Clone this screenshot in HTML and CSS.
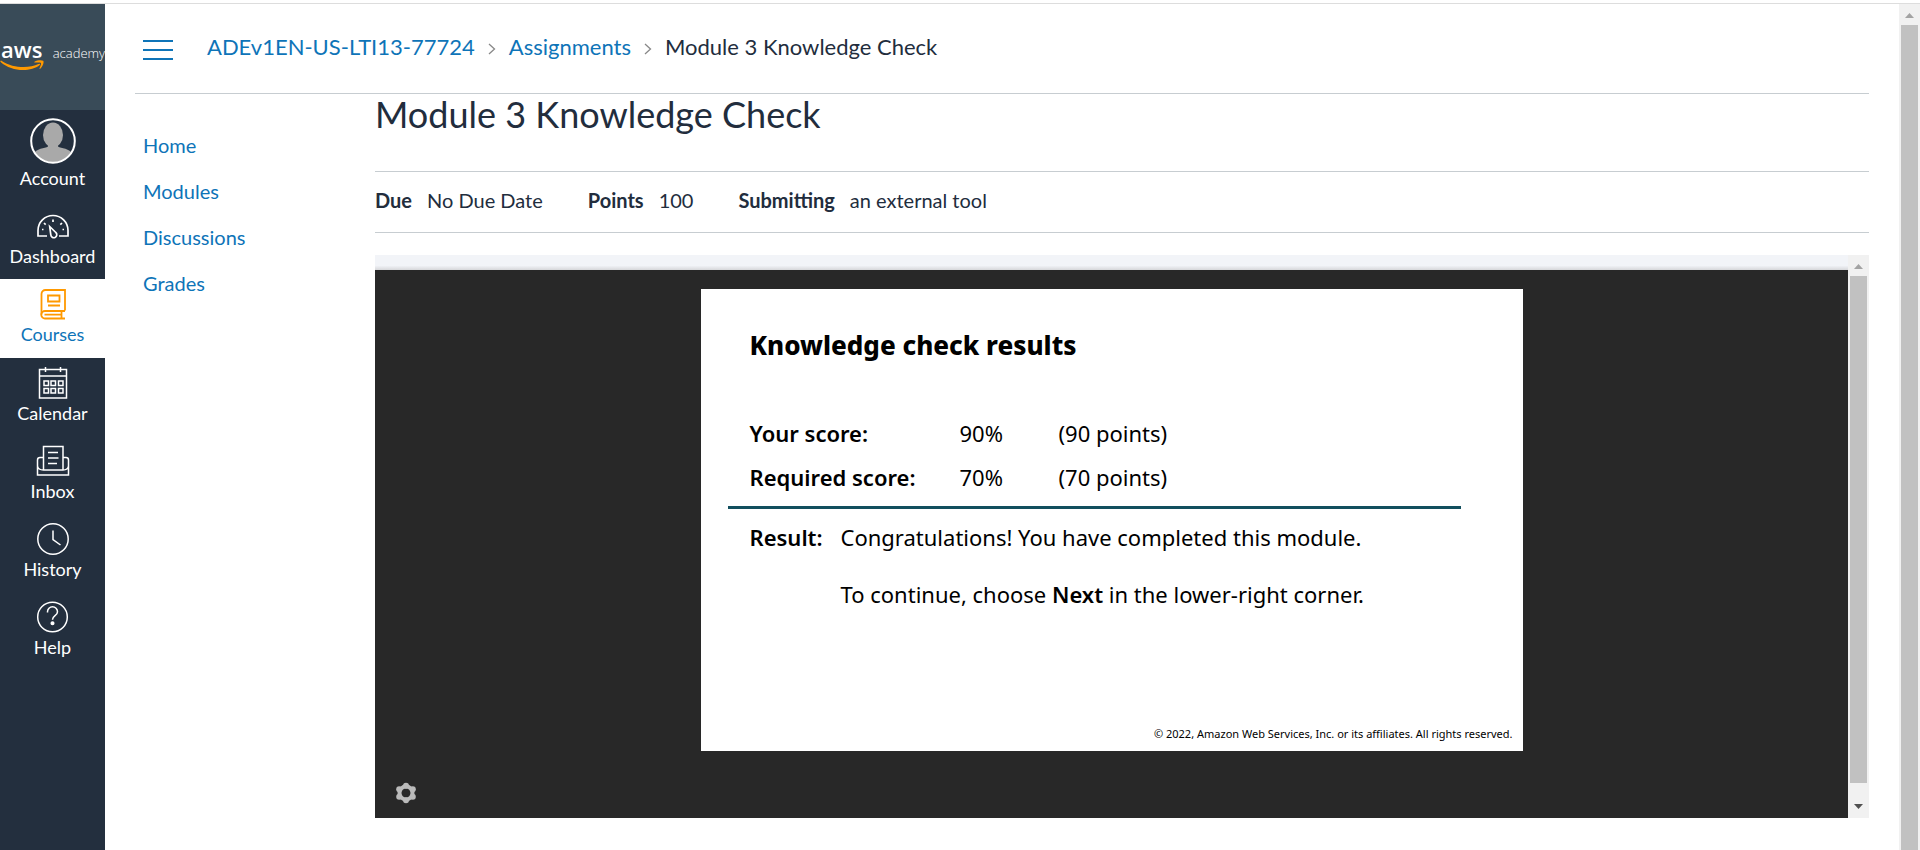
FILE: index.html
```html
<!DOCTYPE html>
<html lang="en">
<head>
<meta charset="utf-8">
<title>Module 3 Knowledge Check</title>
<link rel="stylesheet" href="styles.css">
</head>
<body>
<div class="app">
  <nav class="global-nav" aria-label="Global">
    <a class="logo" href="#">
      <span class="logo-aws">aws
        <svg class="logo-smile" viewBox="0 0 44 11" width="44" height="11" fill="#ff9900" aria-hidden="true"><path d="M.3 1.2Q.8.2 1.8.9C13 8.300 29 8.600 38.500 4Q40.800 3.300 39.700 5C31 12 12 12.300.6 2Z"/><path d="M34.500 1.700C37 .2 41.500-.2 43.200.8 44.400 2 42.600 7 40.300 8.800 39.500 9.200 39.300 8.800 39.600 8.200 40.500 6 41.400 3.600 40.900 2.900 40.200 2.200 37.600 2.400 35 2.600 34.200 2.600 34 2.200 34.500 1.700Z"/></svg>
      </span>
      <span class="logo-academy">academy</span>
    </a>
    <a class="nav-item nav-account" href="#">
      <svg width="46" height="46" viewBox="0 0 46 46" aria-hidden="true"><defs><clipPath id="face"><circle cx="23" cy="23" r="21.500"/></clipPath></defs><g clip-path="url(#face)" fill="#a9a9a9"><ellipse cx="23" cy="17" rx="10" ry="12.500"/><path d="M18 25h10v3.500c3 2 12 1.500 14.500 8V46h-39V36.500C6 30 15 30.500 18 28.500Z"/></g><circle cx="23" cy="23" r="21.800" fill="none" stroke="#fff" stroke-width="2"/></svg>
      <span>Account</span>
    </a>
    <a class="nav-item" href="#">
      <svg width="34" height="32" viewBox="0 0 34 32" fill="none" stroke="#fff" stroke-width="1.700" aria-hidden="true"><path d="M11 26H2V20.500a15 15 0 0 1 30 0V26H23"/><path d="M13.700 16.500 19.800 22.500a3 3 0 1 1-5 2.300Z"/><path d="M17 9.500v2.600M8 13l1.700 1.600M26 13l-1.700 1.600M6 19.500h1.500M26.500 19.500H28"/></svg>
      <span>Dashboard</span>
    </a>
    <a class="nav-item active" href="#">
      <svg width="34" height="32" viewBox="0 0 34 32" fill="none" stroke="#ff9900" stroke-width="1.800" aria-hidden="true"><path d="M29 22.500V2H9.500A4 4 0 0 0 5.500 6V26.500"/><path d="M29 23H9a3.700 3.700 0 0 0 0 7.500H29M25.500 23v7M8.500 26.700H25.500M12 7.500H23.500V13.500H12ZM12 17.500H24"/></svg>
      <span>Courses</span>
    </a>
    <a class="nav-item" href="#">
      <svg width="34" height="32" viewBox="0 0 34 32" fill="none" stroke="#fff" stroke-width="1.500" aria-hidden="true"><path d="M3.500 2.500H30.500V31H3.500ZM3.500 9H30.500M9.500 0v5M24.500 0v5"/><path d="M8 14h4.500v4.500H8ZM15 14h4.500v4.500H15ZM22.500 14H27v4.500h-4.500ZM8 21.500h4.500V26H8ZM15 21.500h4.500V26H15ZM22.500 21.500H27V26h-4.500Z"/></svg>
      <span>Calendar</span>
    </a>
    <a class="nav-item" href="#">
      <svg width="34" height="32" viewBox="0 0 34 32" fill="none" stroke="#fff" stroke-width="1.500" aria-hidden="true"><path d="M7.500 25V1.500H27V25M7.500 12.500H4A2.500 2.500 0 0 0 1.500 15V30H32.500V15A2.500 2.500 0 0 0 30 12.500H27M1.500 21C2 24.500 4 25 7.500 25H27C30 25 32 24.500 32.500 21M12 7.500H22M12 13H22.500M12 18.500H21"/></svg>
      <span>Inbox</span>
    </a>
    <a class="nav-item" href="#">
      <svg width="34" height="32" viewBox="0 0 34 32" fill="none" stroke="#fff" stroke-width="1.500" aria-hidden="true"><circle cx="17" cy="16" r="15.200"/><path d="M17 7.500V16.500L24.500 22"/></svg>
      <span>History</span>
    </a>
    <a class="nav-item" href="#">
      <svg width="34" height="32" viewBox="0 0 34 32" fill="none" stroke="#fff" stroke-width="1.500" aria-hidden="true"><circle cx="16.500" cy="16" r="14.800"/><path d="M11.500 11.500v-.8a5 5 0 0 1 10 0c0 4.300-5 3.600-5 8"/><circle cx="16.500" cy="22.300" r="1.300" fill="#fff"/></svg>
      <span>Help</span>
    </a>
  </nav>

  <div class="page">
    <header class="topbar">
      <button class="menu-toggle" type="button" aria-label="Toggle course navigation"><span></span><span></span><span></span></button>
      <nav class="crumbs" aria-label="Breadcrumbs">
        <a href="#">ADEv1EN-US-LTI13-77724</a>
        <svg width="8" height="12" viewBox="0 0 8 12" fill="none" stroke="#888" stroke-width="1.300" aria-hidden="true"><path d="M1 1l5.500 5L1 11"/></svg>
        <a href="#">Assignments</a>
        <svg width="8" height="12" viewBox="0 0 8 12" fill="none" stroke="#888" stroke-width="1.300" aria-hidden="true"><path d="M1 1l5.500 5L1 11"/></svg>
        <span>Module 3 Knowledge Check</span>
      </nav>
    </header>
    <div class="columns">
      <nav class="course-nav" aria-label="Course">
        <a href="#">Home</a>
        <a href="#">Modules</a>
        <a href="#">Discussions</a>
        <a href="#">Grades</a>
      </nav>
      <main class="content">
        <h1>Module 3 Knowledge Check</h1>
        <dl class="details">
          <div><dt>Due</dt><dd>No Due Date</dd></div>
          <div><dt>Points</dt><dd>100</dd></div>
          <div><dt>Submitting</dt><dd>an external tool</dd></div>
        </dl>
        <div class="tool">
          <div class="tool-view">
            <div class="tool-strip"></div>
            <div class="player">
              <section class="slide">
                <h2>Knowledge check results</h2>
                <table class="scores">
                  <tr><th scope="row">Your score:</th><td>90%</td><td>(90 points)</td></tr>
                  <tr><th scope="row">Required score:</th><td>70%</td><td>(70 points)</td></tr>
                </table>
                <div class="result">
                  <b>Result:</b>
                  <div>
                    <p>Congratulations! You have completed this module.</p>
                    <p>To continue, choose <b>Next</b> in the lower-right corner.</p>
                  </div>
                </div>
                <footer>© 2022, Amazon Web Services, Inc. or its affiliates. All rights reserved.</footer>
              </section>
              <button class="settings" type="button" aria-label="Settings">
                <svg width="22" height="22" viewBox="0 0 22 22" fill="#bbb" aria-hidden="true"><circle cx="11" cy="11" r="6.500" fill="none" stroke="#bbb" stroke-width="4"/><circle cx="11" cy="3.700" r="3"/><circle cx="11" cy="18.300" r="3"/><circle cx="4.200" cy="7.300" r="3"/><circle cx="17.800" cy="7.300" r="3"/><circle cx="4.200" cy="14.700" r="3"/><circle cx="17.800" cy="14.700" r="3"/></svg>
              </button>
            </div>
          </div>
          <div class="scrollbar tool-scroll" aria-hidden="true">
            <svg width="9" height="5" viewBox="0 0 9 5" fill="#a3a3a3"><path d="M0 5L4.500 0 9 5Z"/></svg>
            <span class="thumb"></span>
            <svg width="9" height="5" viewBox="0 0 9 5" fill="#505050"><path d="M0 0L4.500 5 9 0Z"/></svg>
          </div>
        </div>
      </main>
    </div>
  </div>

  <div class="scrollbar page-scroll" aria-hidden="true">
    <svg width="9" height="5" viewBox="0 0 9 5" fill="#a3a3a3"><path d="M0 5L4.500 0 9 5Z"/></svg>
    <span class="thumb"></span>
  </div>
</div>
</body>
</html>
```
FILE: styles.css
```css
* { box-sizing: border-box; }

body {
  margin: 0;
  padding-top: 3px;
  background: #fff;
  color: #222d3d;
  font-family: Lato, "Liberation Sans", sans-serif;
  font-size: 20px;
}

a { color: #0e74b8; text-decoration: none; }

.app {
  display: grid;
  grid-template-columns: 105px minmax(0, 1fr) 21px;
  min-height: calc(100vh - 3px);
  border-top: 1px solid #ddd;
}

/* Global navigation */
.global-nav { background: #232f3e; }

.logo {
  display: flex;
  align-items: baseline;
  justify-content: space-between;
  height: 106px;
  padding: 29px 0 0 1px;
  background: #394b58;
  color: #fff;
  font-family: "Open Sans", sans-serif;
  line-height: 32px;
}
.logo-aws { position: relative; font-size: 22px; font-weight: 600; }
.logo-smile { position: absolute; left: -1px; top: 27px; }
.logo-academy { font-size: 13px; font-weight: 300; }

.nav-item {
  display: flex;
  flex-direction: column;
  align-items: center;
  height: 78px;
  padding-top: 9px;
  color: #fff;
  font-size: 18px;
  line-height: 22px;
  gap: 3px;
}
.nav-account { height: 91px; padding-top: 8px; }
.active { height: 79px; background: #fff; color: #0e74b8; }

/* Header */
.page { padding: 0 30px; }

.topbar {
  display: flex;
  align-items: center;
  height: 90px;
  padding: 0 8px 4px;
  gap: 34px;
  border-bottom: 1px solid #c7cdd1;
}
.menu-toggle {
  display: grid;
  gap: 7px;
  width: 30px;
  padding: 6px 0 0;
  border: 0;
  background: none;
}
.menu-toggle span { height: 2px; background: #0e74b8; }

.crumbs { display: flex; align-items: center; gap: 13px; font-size: 22px; line-height: 28px; }
.crumbs svg { margin-top: 4px; }

/* Columns */
.columns { display: grid; grid-template-columns: 240px minmax(0, 1fr); }

.course-nav { display: flex; flex-direction: column; padding: 28px 0 0 8px; }
.course-nav a { line-height: 46px; }

h1 { margin: 0; font-size: 36px; font-weight: 400; line-height: 40px; }

.details {
  display: flex;
  gap: 45px;
  margin: 37px 0 22px;
  padding: 16px 0 19px;
  border: solid #c7cdd1;
  border-width: 1px 0;
  line-height: 25px;
}
.details div { display: flex; gap: 15px; }
.details dt { font-weight: 700; }
.details dd { margin: 0; }

/* Embedded tool */
.tool { display: grid; grid-template-columns: minmax(0, 1fr) 21px; }
.tool-strip { height: 15px; background: linear-gradient(#f2f4f8 70%, #d6d7da); }
.player { padding: 19px 0 14px; background: #282828; }

.slide {
  width: 822px;
  max-width: 100%;
  min-height: 462px;
  margin: 0 auto;
  padding: 37px 10px 9px 49px;
  display: flex;
  flex-direction: column;
  background: #fff;
  color: #000;
  font-family: "Noto Sans", sans-serif;
  font-size: 22px;
  line-height: 30px;
}
.slide h2 { margin: 0 0 47px; font-size: 26px; font-weight: 800; line-height: 38px; }
.slide p { margin: 0 0 27px; }
.slide b, .scores th { font-weight: 600; }

.scores { width: 440px; border-collapse: collapse; line-height: 44px; }
.scores th { width: 210px; padding: 0; text-align: left; }
.scores td { padding: 0; white-space: nowrap; }
.scores td:last-child { width: 131px; }

.result {
  display: grid;
  grid-template-columns: 91px 1fr;
  margin: 7px 52px 0 -22px;
  padding: 13px 0 0 22px;
  border-top: 3px solid #124f5e;
}
.slide footer { margin-top: auto; text-align: right; font-size: 11px; line-height: 16px; }

.settings { display: block; margin: 31px 0 0 20px; padding: 0; border: 0; background: none; line-height: 0; }

/* Scrollbars */
.scrollbar { display: flex; flex-direction: column; align-items: center; background: #f1f1f1; padding-top: 9px; }
.thumb { flex: 1; width: 17px; margin-top: 7px; background: #c1c1c1; }
.tool-scroll { padding-bottom: 9px; }
.tool-scroll .thumb { margin-bottom: 21px; }
```
